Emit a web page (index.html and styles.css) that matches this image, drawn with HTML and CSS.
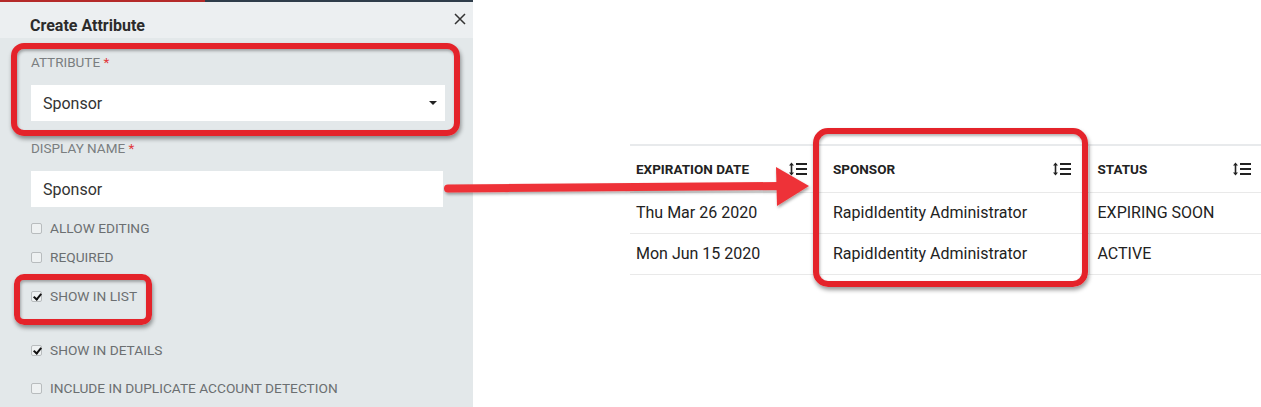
FILE: index.html
```html
<!DOCTYPE html>
<html>
<head>
<meta charset="utf-8">
<link rel="stylesheet" href="styles.css">
</head>
<body>
<div class="page">
  <aside class="panel">
    <header class="panel-head">
      <h1 class="title">Create Attribute</h1>
      <svg class="close" viewBox="0 0 12 12"><path d="M1 1L11 11M11 1L1 11" stroke="#333" stroke-width="1.5"/></svg>
    </header>
    <div class="panel-body">
      <div class="label l-attr">ATTRIBUTE <span class="req">*</span></div>
      <div class="field select">Sponsor<span class="caret"></span></div>
      <div class="label l-name">DISPLAY NAME <span class="req">*</span></div>
      <div class="field input">Sponsor</div>
      <div class="check c1"><span class="box"></span>ALLOW EDITING</div>
      <div class="check c2"><span class="box"></span>REQUIRED</div>
      <div class="check c3"><span class="box on"></span>SHOW IN LIST</div>
      <div class="check c4"><span class="box on"></span>SHOW IN DETAILS</div>
      <div class="check c5"><span class="box"></span>INCLUDE IN DUPLICATE ACCOUNT DETECTION</div>
    </div>
  </aside>
  <main class="content">
    <table class="grid">
      <thead>
        <tr>
          <th class="col1"><div class="th-in">EXPIRATION DATE<svg class="sort" viewBox="0 0 18 14"><path d="M2.5 2.5v9" stroke="#222" stroke-width="1.6"/><path d="M0 3.6L2.5 0.4 5 3.6z M0 10.4L2.5 13.6 5 10.4z" fill="#222"/><path d="M7 2h11M7 7h11M7 12h11" stroke="#222" stroke-width="2"/></svg></div></th>
          <th class="col2"><div class="th-in">SPONSOR<svg class="sort" viewBox="0 0 18 14"><path d="M2.5 2.5v9" stroke="#222" stroke-width="1.6"/><path d="M0 3.6L2.5 0.4 5 3.6z M0 10.4L2.5 13.6 5 10.4z" fill="#222"/><path d="M7 2h11M7 7h11M7 12h11" stroke="#222" stroke-width="2"/></svg></div></th>
          <th class="col3"><div class="th-in">STATUS<svg class="sort" viewBox="0 0 18 14"><path d="M2.5 2.5v9" stroke="#222" stroke-width="1.6"/><path d="M0 3.6L2.5 0.4 5 3.6z M0 10.4L2.5 13.6 5 10.4z" fill="#222"/><path d="M7 2h11M7 7h11M7 12h11" stroke="#222" stroke-width="2"/></svg></div></th>
        </tr>
      </thead>
      <tbody>
        <tr><td class="col1">Thu Mar 26 2020</td><td class="col2">RapidIdentity Administrator</td><td class="col3">EXPIRING SOON</td></tr>
        <tr><td class="col1">Mon Jun 15 2020</td><td class="col2">RapidIdentity Administrator</td><td class="col3">ACTIVE</td></tr>
      </tbody>
    </table>
  </main>

  <div class="mark m1"></div>
  <div class="mark m2"></div>
  <div class="mark m3"></div>
  <svg class="arrow" viewBox="0 0 1261 407" width="1261" height="407">
    <defs>
      <filter id="sh" x="-5%" y="-50%" width="110%" height="200%">
        <feDropShadow dx="1" dy="2" stdDeviation="1.5" flood-color="#000" flood-opacity="0.35"/>
      </filter>
    </defs>
    <g filter="url(#sh)" fill="#ee3338">
      <path d="M448 188.5 L782 186" stroke="#ee3338" stroke-width="8" stroke-linecap="round"/>
      <path d="M776 167 L809 186 L777 206 Z"/>
    </g>
  </svg>
</div>
</body>
</html>
```

FILE: styles.css
```css
* { box-sizing: border-box; }
html, body { margin: 0; padding: 0; }
body {
  font-family: Roboto, "Noto Sans", "Liberation Sans", sans-serif;
  background: #fff;
  color: #222;
}
.page {
  position: relative;
  width: 1261px;
  height: 407px;
  overflow: hidden;
  display: flex;
}
.panel {
  width: 473px;
  flex: none;
  background: #e3e8ea;
  display: flex;
  flex-direction: column;
}
.panel-head {
  height: 38px;
  background: #eceff1;
  border-top: 2px solid;
  border-image: linear-gradient(to right, #b52a2a 0, #b52a2a 205px, #2f3d4a 205px, #2f3d4a 100%) 1;
  display: flex;
  align-items: flex-start;
  justify-content: space-between;
  padding: 0 7px 0 30px;
}
.title {
  margin: 15px 0 0;
  font-size: 16px;
  font-weight: 700;
  color: #2b2b2b;
  line-height: 18px;
}
.close {
  width: 12px;
  height: 12px;
  margin-top: 11px;
}
.panel-body {
  padding-left: 31px;
  display: flex;
  flex-direction: column;
  align-items: flex-start;
}
.label {
  font-size: 13.5px;
  line-height: 16px;
  color: #7a7e80;
}
.req { color: #e0383c; }
.l-attr { margin-top: 16px; }
.l-name { margin-top: 19px; }
.field {
  background: #fff;
  height: 36px;
  font-size: 16px;
  color: #333;
  padding-left: 12px;
  display: flex;
  align-items: center;
  margin-top: 15px;
  position: relative;
}
.select { width: 414px; }
.input { width: 412px; }
.caret {
  position: absolute;
  right: 8px;
  top: 16px;
  border-left: 4px solid transparent;
  border-right: 4px solid transparent;
  border-top: 4px solid #222;
}
.check {
  display: flex;
  align-items: center;
  height: 20px;
  font-size: 13.7px;
  color: #6b6f71;
}
.box {
  width: 11px;
  height: 11px;
  border: 1px solid #b8bcbe;
  border-radius: 2px;
  background: #eef1f2;
  margin-right: 8px;
  position: relative;
}
.box.on::after {
  content: "";
  position: absolute;
  left: 3px;
  top: 0px;
  width: 3px;
  height: 6px;
  border-right: 2px solid #111;
  border-bottom: 2px solid #111;
  transform: rotate(40deg);
}
.c1 { margin-top: 11px; }
.c2 { margin-top: 9px; }
.c3 { margin-top: 19px; }
.c4 { margin-top: 34px; }
.c5 { margin-top: 18px; }

.content {
  flex: 1;
  padding: 144px 0 0 157px;
}
.grid {
  border-collapse: collapse;
  width: 631px;
  table-layout: fixed;
  border-top: 2px solid #e8eaec;
  border-right: 1px solid #ececec;
}
.grid th, .grid td {
  text-align: left;
  padding: 0 0 0 8px;
  border-bottom: 1px solid #e9e9e9;
}
.grid th { height: 47px; }
.grid td { height: 41px; font-size: 16px; color: #222; }
.col1 { width: 195px; }
.grid th.col1, .grid td.col1 { padding-left: 6px; }
.col2 { width: 264px; }
.col3 { width: 172px; border-left: 1px solid #ececec; }
.th-in {
  display: flex;
  align-items: center;
  justify-content: space-between;
  font-size: 13.5px;
  font-weight: 700;
  color: #222;
  padding-right: 18px;
}
.col3 .th-in { padding-right: 10px; }
.sort { width: 18px; height: 14px; }

.mark {
  position: absolute;
  border: 6px solid #e4232a;
  border-radius: 13px;
  box-shadow: 1px 3px 4px rgba(0,0,0,0.4), inset 1px 2px 3px rgba(0,0,0,0.3);
}
.m1 { left: 11px; top: 43px; width: 449px; height: 93px; }
.m2 { left: 14px; top: 274px; width: 138px; height: 51px; border-radius: 10px; }
.m3 { left: 813px; top: 128px; width: 275px; height: 159px; border-radius: 15px; }
.arrow {
  position: absolute;
  left: 0;
  top: 0;
  pointer-events: none;
}
```
